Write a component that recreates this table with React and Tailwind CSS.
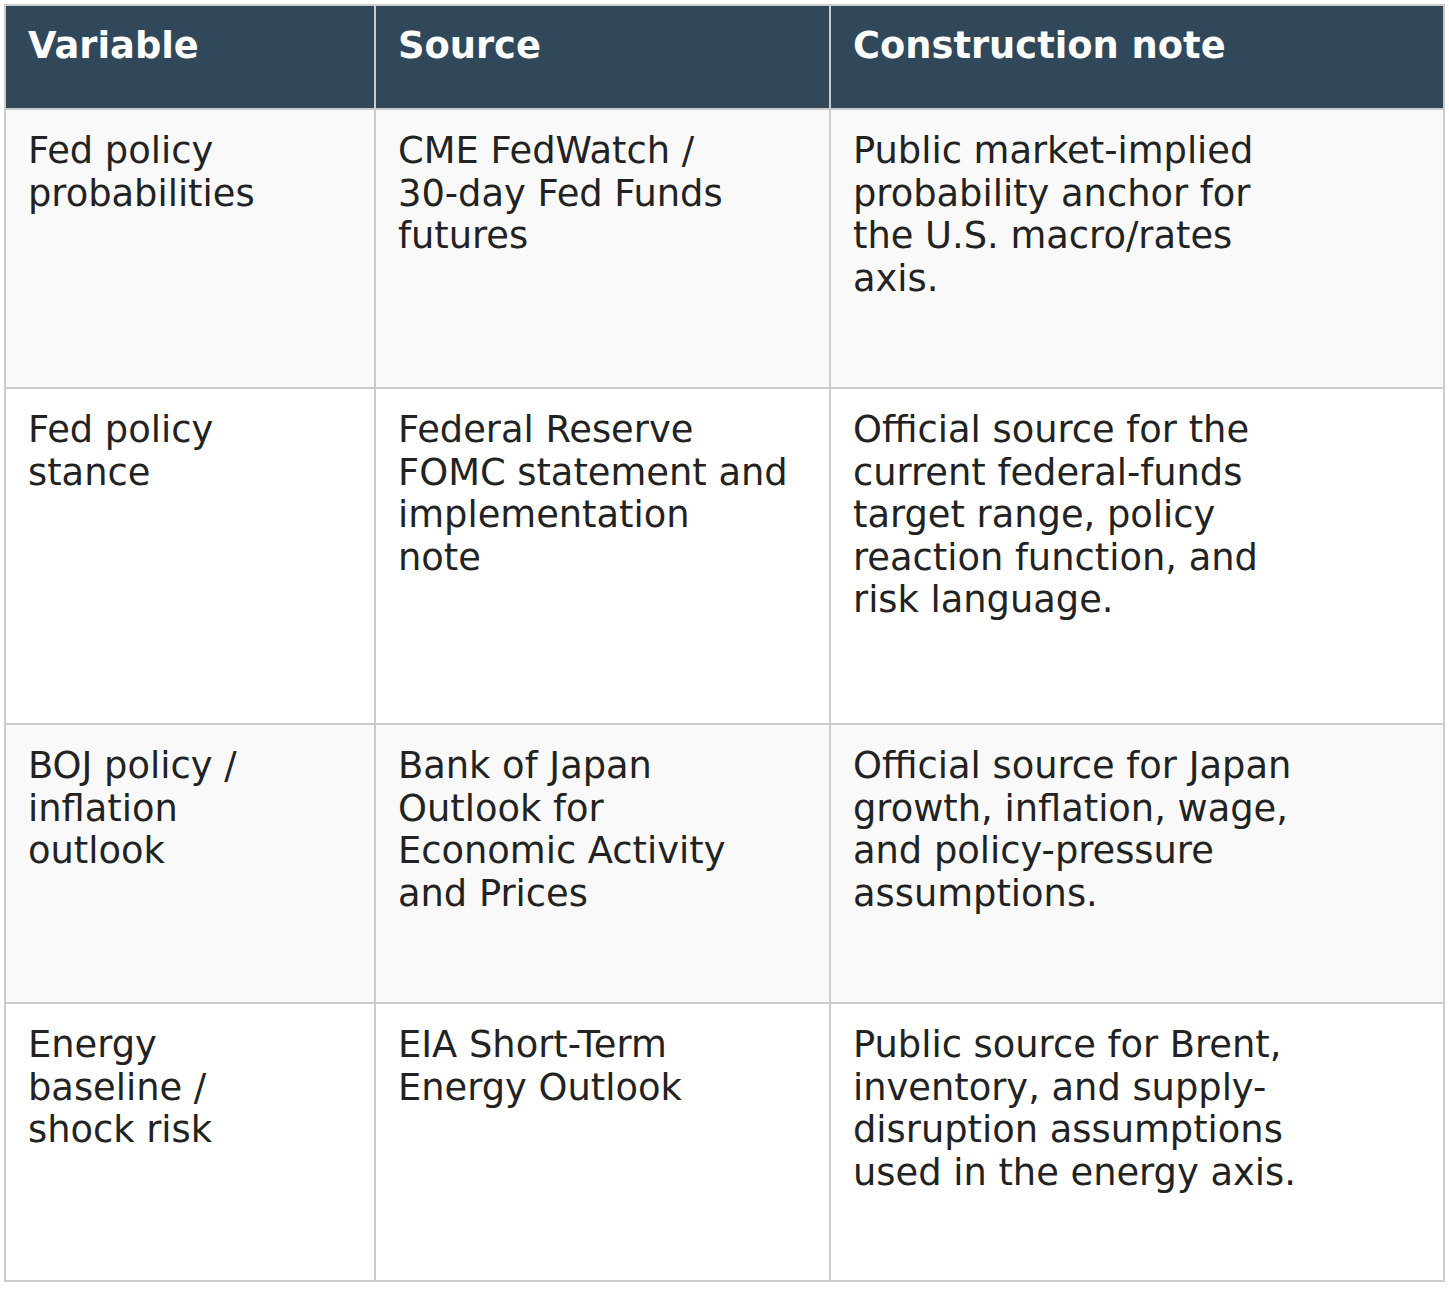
const rows = [
  {
    h: "h-[279px]",
    bg: "bg-[#f9f9f9]",
    cells: [
      ["Fed policy", "probabilities"],
      ["CME FedWatch /", "30-day Fed Funds", "futures"],
      ["Public market-implied", "probability anchor for", "the U.S. macro/rates", "axis."],
    ],
  },
  {
    h: "h-[336px]",
    bg: "bg-white",
    cells: [
      ["Fed policy", "stance"],
      ["Federal Reserve", "FOMC statement and", "implementation", "note"],
      [
        "Official source for the",
        "current federal-funds",
        "target range, policy",
        "reaction function, and",
        "risk language.",
      ],
    ],
  },
  {
    h: "h-[279px]",
    bg: "bg-[#f9f9f9]",
    cells: [
      ["BOJ policy /", "inflation", "outlook"],
      ["Bank of Japan", "Outlook for", "Economic Activity", "and Prices"],
      ["Official source for Japan", "growth, inflation, wage,", "and policy-pressure", "assumptions."],
    ],
  },
  {
    h: "h-[278px]",
    bg: "bg-white",
    cells: [
      ["Energy", "baseline /", "shock risk"],
      ["EIA Short-Term", "Energy Outlook"],
      ["Public source for Brent,", "inventory, and supply-", "disruption assumptions", "used in the energy axis."],
    ],
  },
];

const headers = ["Variable", "Source", "Construction note"];

export default function App() {
  return (
    <div className="min-h-screen bg-white pl-[4px] pt-[4px] font-['DejaVu_Sans',sans-serif]">
      <div className="grid w-[1441px] grid-cols-[370px_455px_614px] border-l-2 border-t-2 border-[#cccccc]">
        {headers.map((h) => (
          <div
            key={h}
            className="h-[104px] border-r-2 border-b-2 border-[#cccccc] bg-[#304859] pl-[22px] pr-[20px] pt-[19px] text-[36.8px] font-bold leading-[42.6px] text-white"
          >
            {h}
          </div>
        ))}
        {rows.map((row, i) =>
          row.cells.map((lines, j) => (
            <div
              key={i + "-" + j}
              className={`${row.h} ${row.bg} border-r-2 border-b-2 border-[#cccccc] pl-[22px] pr-[20px] pt-[20px] text-[36.8px] leading-[42.6px] text-[#222222]`}
            >
              {lines.map((l) => (
                <div key={l} className="whitespace-nowrap">
                  {l}
                </div>
              ))}
            </div>
          ))
        )}
      </div>
    </div>
  );
}
